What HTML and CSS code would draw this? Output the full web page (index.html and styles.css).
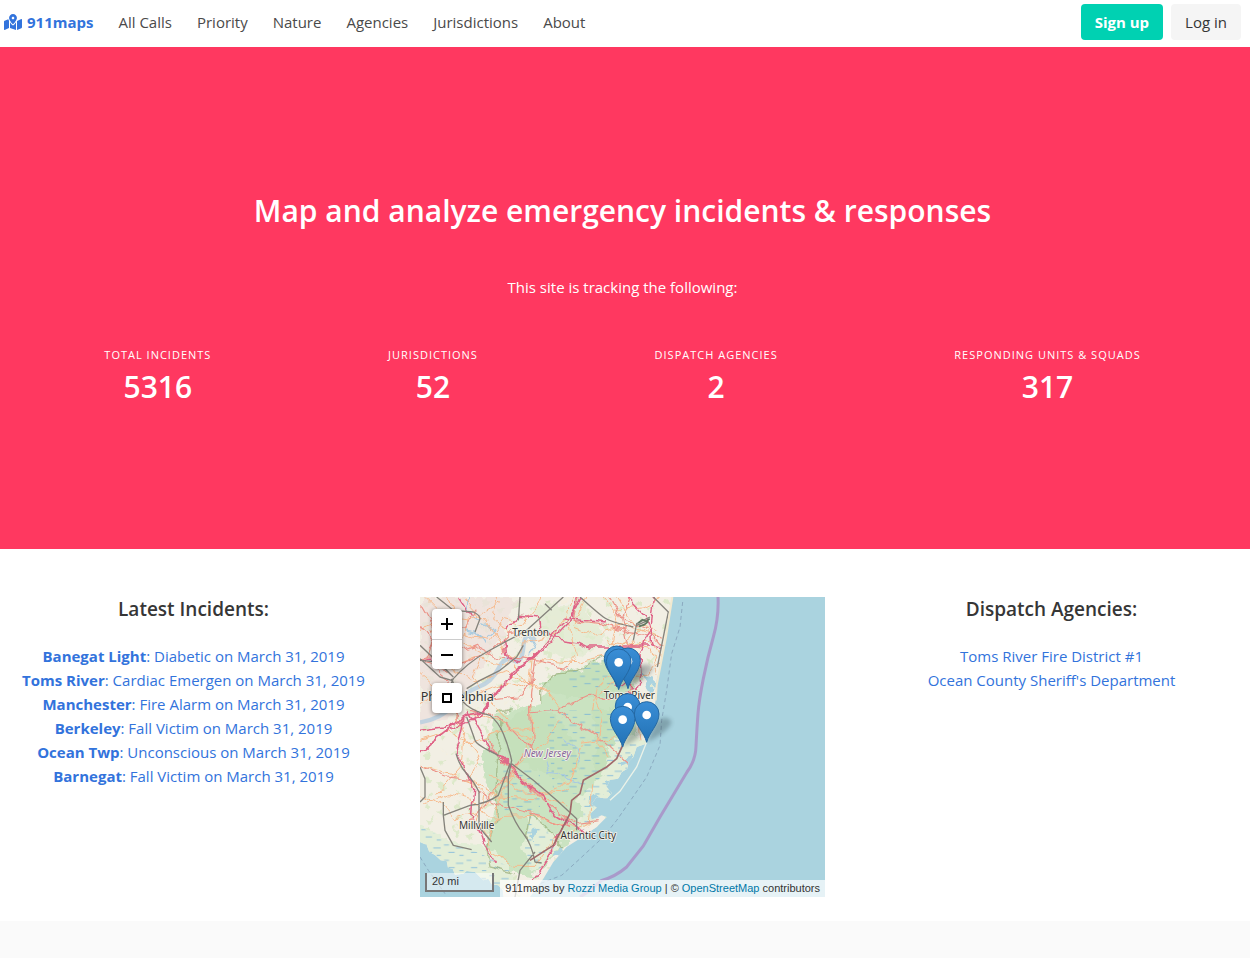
FILE: index.html
```html
<!DOCTYPE html>
<html lang="en">
<head>
<meta charset="utf-8">
<meta name="viewport" content="width=device-width, initial-scale=1">
<title>911maps</title>
<link rel="stylesheet" href="styles.css">
</head>
<body>
<nav class="navbar" aria-label="Main">
  <a class="brand" href="#">
    <svg class="brand-icon" viewBox="0 0 576 512" aria-hidden="true"><path fill="currentColor" d="M288 0c-69.59 0-126 56.41-126 126 0 56.26 82.35 158.8 113.9 196.02 6.39 7.54 17.82 7.54 24.2 0C331.65 284.8 414 182.26 414 126 414 56.41 357.59 0 288 0zm0 168c-23.2 0-42-18.8-42-42s18.8-42 42-42 42 18.8 42 42-18.8 42-42 42zM20.12 215.95A32.006 32.006 0 0 0 0 245.66v250.32c0 11.32 11.43 19.06 21.94 14.86L160 448V214.92c-8.84-15.98-16.07-31.54-21.25-46.42L20.12 215.95zM288 359.67c-14.07 0-27.38-6.18-36.51-16.96-19.66-23.2-40.57-49.62-59.49-76.72v182l192 64V266c-18.92 27.09-39.82 53.52-59.49 76.72-9.13 10.77-22.44 16.95-36.51 16.95zm266.06-198.51L416 224v288l139.88-55.95A31.996 31.996 0 0 0 576 426.34V176.02c0-11.32-11.43-19.06-21.94-14.86z"/></svg>
    <span>911maps</span>
  </a>
  <div class="nav-links">
    <a href="#">All Calls</a>
    <a href="#">Priority</a>
    <a href="#">Nature</a>
    <a href="#">Agencies</a>
    <a href="#">Jurisdictions</a>
    <a href="#">About</a>
  </div>
  <div class="nav-buttons">
    <a class="button button-primary" href="#">Sign up</a>
    <a class="button" href="#">Log in</a>
  </div>
</nav>

<header class="hero">
  <h1 class="hero-title">Map and analyze emergency incidents &amp; responses</h1>
  <p class="hero-lead">This site is tracking the following:</p>
  <dl class="stats">
    <div class="stat"><dt>Total Incidents</dt><dd>5316</dd></div>
    <div class="stat"><dt>Jurisdictions</dt><dd>52</dd></div>
    <div class="stat"><dt>Dispatch Agencies</dt><dd>2</dd></div>
    <div class="stat"><dt>Responding Units &amp; Squads</dt><dd>317</dd></div>
  </dl>
</header>

<main class="section">
  <div class="columns">
    <section class="column">
      <h2 class="column-title">Latest Incidents:</h2>
      <ul class="list">
        <li><a href="#"><strong>Banegat Light</strong>: Diabetic on March 31, 2019</a></li>
        <li><a href="#"><strong>Toms River</strong>: Cardiac Emergen on March 31, 2019</a></li>
        <li><a href="#"><strong>Manchester</strong>: Fire Alarm on March 31, 2019</a></li>
        <li><a href="#"><strong>Berkeley</strong>: Fall Victim on March 31, 2019</a></li>
        <li><a href="#"><strong>Ocean Twp</strong>: Unconscious on March 31, 2019</a></li>
        <li><a href="#"><strong>Barnegat</strong>: Fall Victim on March 31, 2019</a></li>
      </ul>
    </section>

    <section class="map" aria-label="Incident map">
      <svg class="map-canvas" viewBox="0 0 1215 900" preserveAspectRatio="xMinYMin slice" role="img" aria-label="Map of New Jersey">
        <defs>
          <linearGradient id="pin-fill" x1="0" y1="0" x2="0" y2="1"><stop offset="0" stop-color="#3a8ed6"/><stop offset="1" stop-color="#2272b5"/></linearGradient>
          <filter id="soft" x="-30%" y="-30%" width="160%" height="160%"><feGaussianBlur stdDeviation="6"/></filter>
          <filter id="winding" filterUnits="userSpaceOnUse" x="-20" y="-20" width="820" height="940"><feTurbulence type="fractalNoise" baseFrequency="0.02" numOctaves="3" seed="4" result="noise"/><feDisplacementMap in="SourceGraphic" in2="noise" scale="34" xChannelSelector="R" yChannelSelector="G"/></filter>
          <filter id="ragged" filterUnits="userSpaceOnUse" x="-20" y="-20" width="820" height="940"><feTurbulence type="fractalNoise" baseFrequency="0.03" numOctaves="3" seed="9" result="noise"/><feDisplacementMap in="SourceGraphic" in2="noise" scale="46" xChannelSelector="R" yChannelSelector="G"/></filter>
          <pattern id="marsh" width="68" height="46" patternUnits="userSpaceOnUse"><path d="M4 8h15M40 17h22M17 30h19M50 39h13" stroke="#62a8dc" stroke-width="2.5" opacity=".8"/></pattern>
          <pattern id="fields" width="90" height="76" patternUnits="userSpaceOnUse"><path d="M8 12l18-6 6 14-16 8zM50 34l24-4-8 20zM20 55l16 4-10 12z" fill="#d2e7bd" opacity=".65"/><path d="M70 4h10v8H70zM42 60h8v7h-8z" fill="#f4efdf"/></pattern>
          <clipPath id="land-clip"><path id="land-shape" d="M0 0H757L749 48 738 120 725 190 710 250 707 310 690 400 678 440 650 450 640 480 625 495 622 515 605 525 595 545 570 548 560 570 575 588 560 605 530 600 515 620 530 632 510 650 515 668 545 655 560 660 530 690 495 715 440 750 400 795 370 845 330 900H250L248 880 235 865 215 862 205 845 190 850 165 825 140 822 130 830 105 833 98 815 84 812 80 792 62 790 45 774 28 765 20 744 0 735Z"/></clipPath>
          <g id="pin">
            <path d="M-37-85A37 37 0 1 1 37-85C37-53 7-30 0 0C-7-30-37-53-37-85Z" fill="url(#pin-fill)" stroke="#2468a3" stroke-width="3"/>
            <circle cy="-82" r="13" fill="#fff"/>
          </g>
          <path id="pin-shadow" d="M0 0L24-56Q55-88 75-62 66-32 0 0Z" fill="#24343c" opacity=".3" filter="url(#soft)"/>
        </defs>
        <rect width="1215" height="900" fill="#aad3df"/>
        <use href="#land-shape" fill="#f2efe4"/>
        <g clip-path="url(#land-clip)">
          <rect width="760" height="900" fill="url(#fields)" filter="url(#ragged)"/>
          <path d="M0 0H300L260 90 200 180 140 280 80 370 0 400Z" fill="#eee1dd" opacity=".75" filter="url(#ragged)"/>
          <path d="M340 30L490 20 560 130 450 200 390 165 360 100Z" fill="#e0ecd0" opacity=".7" filter="url(#ragged)"/>
          <g filter="url(#ragged)">
            <path d="M180 500L230 350 300 330 365 315 365 270 410 225 485 218 560 180 620 195 650 290 660 450 600 510 530 580 470 690 490 710 430 750 390 800 340 835 290 830 210 810 200 750 225 620Z" fill="#cae3c1"/>
            <path d="M240 380L330 340 410 360 455 430 480 510 430 560 370 520 270 490ZM365 270L410 225 485 218 550 182 610 260 545 300 450 300ZM520 340L590 330 590 510 530 520Z" fill="#bfdeb6" opacity=".5"/>
            <path d="M580 420L690 430 650 500 590 590 550 640 485 700 470 590 550 540ZM330 640L420 740 380 800 340 830 310 750ZM-20 680L120 740 205 745 280 825 285 880 100 853 -20 760Z" fill="#e3eed7"/>
          </g>
          <path d="M580 440L680 440 600 610 490 700 490 610ZM330 640L410 740 350 830 310 790ZM0 690L270 810 280 890 80 840 0 760ZM380 340H600V590H400ZM440 210L560 185 610 280 450 280ZM250 520H360V650H250Z" fill="url(#marsh)"/>
          <path d="M600 490l35-15 10 15-35 20zM560 565l25-10 15 10-25 28-15-8zM515 600l25-5 15 15-25 10-18 5zM395 780l20-25 15 17-25 15zM665 220l32 20 5 55-18-15zM340 690l12 10-5 25-14-10z" fill="#aad3df" filter="url(#ragged)"/>
          <path d="M0 376Q65 365 100 325T175 270 235 215 280 190 310 150 345 130" fill="none" stroke="#b8cfdf" stroke-width="13" opacity=".85"/>
          <g filter="url(#winding)" fill="none">
            <path d="M110 95l60 10 20 35M150 0l-15 35 45 30M325 120l22 35-18 24M380 490l10 30 30 4 20 20 40 15M440 430l35 30 5 35M190 80l30 15-25 22" stroke="#a9cbe0" stroke-width="4"/>
            <path d="M365 315L365 270 410 225 485 218 560 180 620 190M240 370L228 650 200 750 210 810 290 830M230 350L275 335M320 740L335 650 370 680 425 750" stroke="#98ac78" stroke-width="4" opacity=".7"/>
          </g>
          <g fill="none" stroke="#f7b98b" stroke-width="3" stroke-linejoin="round" filter="url(#winding)">
            <path d="M80 0l15 40-65 70 85 90 50-20 90 25 70-70 80-20 60-115M125 110l80 15 45-60 60 15 60-80M20 0l60 60 70 10 90-50M130 0l65 70 85 130 50 70 40 10M0 100l50-15 25 110 90 60 95-30 100 60M150 50l-30 80 70 40-30 70 100 130"/>
            <path d="M230 0l-15 70 90 60M500 0l-35 90 60 25 90-30 110 35M440 60l30 115-35 40M350 200l30-15 95 10 95-20 120-95M550 0l45 60-15 75 60 80M0 230l80 70 60 100-10 100-80 90M0 430l80-25 70 35 110-40 100-10M150 350l100 30 80 50M340 180l-10 110 10 120-60 110-50 100-25 115"/>
            <path d="M0 510l85 20 80 30 70 40 110 5 105-50 40-120 110-15M130 420l50 60-30 70 40 40-20 85M10 620l80-30 70 20 45 50 140-5 120 40M0 600l60 25 40 40 80-25 100-125 80-70 75-90M330 260l55 25 40 50M180 680l35 85 70 40 60 0 50-70 110-50 10-120M650 130l-50 65-75 80-10 65"/>
            <path d="M590 0l45 75 80 20M580 40l85-10 60-30M610 155l85-20 30 50-40 50-60 0M560 130l130 30 30 70M535 290l55-50 40 10 20 90 10 90M260 530l55 20 50 50 80 30M450 570l-30 20-105-5-110-55M0 320l60-40 95 15 100-40 60 20M520 300l25 55-10 75 35 50"/>
          </g>
          <g fill="none" stroke="#ec9388" stroke-width="3.5" stroke-linejoin="round" filter="url(#winding)">
            <path d="M0 185l80-5 90-35 70 35 105 10 100 20M350 170l-18 130 0 45 5 100-70 80-120 150M150 340l65 15 55 35 70 70M0 510l80 30 75 8M170 585l90 45 100 25 85 40M200 425l55 80 65 60 50 45 80 65M330 345l85-10 90-40 45 15 50 0M410 335l60 45 80 50 90 80M0 85l35 55-20 60 65 20M0 15l45 80-20 65M30 110l100-15 45-60M210 310l85-10 50-50M30 210l50 40 10 75 45 50M120 200l95-35 70-70"/>
            <path d="M570 0l35 65 75 30 60 75M630 0l-25 70 20 90M480 0l-15 70 80 10 85 30 95 10M400 650l80 35 50-8"/>
          </g>
          <g fill="none" stroke="#df6487" stroke-width="4.5" stroke-linejoin="round" filter="url(#winding)">
            <path d="M0 465L80 400 175 355 215 310 260 245 350 175 400 110 470 40 490 0M15 450L100 380 140 355 180 345 225 290 280 220 345 185 420 105 463 60 475 0M140 345L190 430 260 505 305 550 370 600 400 650 470 695 500 710M135 360L120 440 110 470 138 520 158 570 152 650 175 690 190 740 230 800M355 100L400 125 475 135 505 150 580 150 690 150M335 850L370 800 400 750 435 675M430 60L560 75M620 0L675 55 690 95 660 180 665 260 630 285M700 0L690 90 695 140 715 150M260 100L300 55 355 60 360 100M0 400L70 390 135 360M0 190L35 190M110 0l30 45 20 5M250 125l10 60 40 10M640 270l-60-10"/>
          </g>
          <g fill="none" stroke="#85837c" stroke-width="4" stroke-linejoin="round">
            <path d="M0 185L60 240 95 250Q145 195 200 165T320 100L430 0M95 245Q115 305 140 325T210 355Q235 375 250 410T275 490L265 540 265 625Q285 680 310 710T345 795L365 798M140 275L180 250 240 220 290 180 310 145M100 240L0 145M0 190l55 5 45 45M275 500L340 550 410 610 470 665 470 700M270 500L235 595Q200 620 150 625L70 655 75 700 100 745 155 758M70 655v-40M140 360Q160 415 165 430T235 475M108 470Q120 510 140 530T177 585V690L215 735M345 765L300 820 285 900M50 0l50 40 60 5Q180 55 180 65L165 105M700 0l45 45-33 165M300 0l-5 70M0 510L15 545 15 600 0 615M480 0Q530 45 550 60T640 90M100 245l-30 65M375 20l20 20M640 130l10-50 40-20M650 85l35-15"/>
            <path d="M608 445L590 485 560 510 490 550 480 590 455 610 450 650 400 745 330 790" stroke="#a1696a" stroke-width="5"/>
          </g>
          <path d="M655 78l12-10 12 5 10-8M657 88l16-5 12-10" stroke="#607760" stroke-width="5" fill="none"/>
        </g>
        <path d="M757 0L738 120 710 265 707 310" fill="none" stroke="#f2e9cf" stroke-width="6"/>
        <path d="M680 435L650 510 600 583 570 610" fill="none" stroke="#ebf2e8" stroke-width="4"/>
        <path d="M788 15L780 90 755 170 740 280 725 370 720 445 680 540 625 620 590 670 550 720 480 785 425 835 360 860M0 780L25 820 75 890" fill="none" stroke="#8baac0" stroke-width="3" stroke-dasharray="12 9"/>
        <path d="M894 0Q897 60 880 120T850 245 834 350 828 448Q827 490 801 525L720 660 670 747 620 810Q585 840 545 850L510 880 480 900" fill="none" stroke="#a99aca" stroke-width="9"/>
        <g class="map-labels">
          <text x="332" y="117">Trenton</text>
          <text class="city" x="112" y="311">Philadelphia</text>
          <text x="628" y="306">Toms River</text>
          <text class="region" x="382" y="480">New Jersey</text>
          <text x="170" y="697">Millville</text>
          <text x="505" y="725">Atlantic City</text>
        </g>
        <use href="#pin-shadow" x="624" y="275"/>
        <use href="#pin-shadow" x="596" y="278"/>
        <use href="#pin-shadow" x="680" y="436"/>
        <use href="#pin-shadow" x="608" y="450"/>
        <use href="#pin" x="590" y="269"/>
        <use href="#pin" x="624" y="275"/>
        <use href="#pin" x="596" y="278"/>
        <use href="#pin" x="623" y="412"/>
        <use href="#pin" x="680" y="436"/>
        <use href="#pin" x="608" y="450"/>
      </svg>
      <div class="map-controls">
        <div class="map-bar">
          <button type="button" aria-label="Zoom in"><svg viewBox="0 0 12 12" aria-hidden="true"><path d="M6 0v12M0 6h12"/></svg></button>
          <button type="button" aria-label="Zoom out"><svg viewBox="0 0 12 12" aria-hidden="true"><path d="M0 6h12"/></svg></button>
        </div>
        <div class="map-bar">
          <button type="button" aria-label="Reset view"><svg viewBox="0 0 12 12" aria-hidden="true"><path d="M2 2h8v8h-8z"/></svg></button>
        </div>
      </div>
      <div class="map-scale">20 mi</div>
      <div class="map-credit">911maps by <a href="#">Rozzi Media Group</a> | © <a href="#">OpenStreetMap</a> contributors</div>
    </section>

    <section class="column">
      <h2 class="column-title">Dispatch Agencies:</h2>
      <ul class="list">
        <li><a href="#">Toms River Fire District #1</a></li>
        <li><a href="#">Ocean County Sheriff's Department</a></li>
      </ul>
    </section>
  </div>
</main>
<footer class="footer"></footer>
</body>
</html>
```
FILE: styles.css
```css
* {
  box-sizing: border-box;
}

body {
  margin: 0;
  min-height: 100vh;
  display: flex;
  flex-direction: column;
  overflow-x: hidden;
  background: #fff;
  color: #4a4a4a;
  font-family: "Segoe UI", "Open Sans", "Noto Sans", sans-serif;
  font-size: 15px;
  line-height: 24px;
}

a {
  color: #3273dc;
  text-decoration: none;
}

h1, h2, p, dl, dd, ul {
  margin: 0;
  padding: 0;
}

.navbar {
  display: flex;
  align-items: center;
  min-height: 47px;
  padding: 0 9px 4px 4px;
}

.brand {
  display: flex;
  align-items: center;
  gap: 5px;
  margin-right: 25px;
  font-weight: 700;
}

.brand-icon {
  width: 18px;
  height: 16px;
}

.nav-links {
  display: flex;
  gap: 25px;
}

.nav-links a {
  color: #4a4a4a;
}

.nav-buttons {
  display: flex;
  gap: 8px;
  margin-left: auto;
}

.button {
  padding: 6px 14px;
  border-radius: 4px;
  background: #f5f5f5;
  color: #363636;
}

.button-primary {
  background: #00d1b2;
  color: #fff;
  font-weight: 700;
}

.hero {
  display: flex;
  flex-direction: column;
  justify-content: center;
  min-height: 502px;
  padding: 48px 21px 48px 16px;
  background: #ff3860;
  color: #fff;
  text-align: center;
}

.hero-title {
  margin-bottom: 44px;
  font-size: 30px;
  font-weight: 600;
  line-height: 40px;
}

.hero-lead {
  margin-bottom: 48px;
}

.stats {
  display: flex;
}

.stat {
  flex: 1 1 auto;
}

.stat dt {
  margin-bottom: 6px;
  font-size: 11px;
  line-height: 16px;
  letter-spacing: 1px;
  text-transform: uppercase;
}

.stat dd {
  font-size: 30px;
  font-weight: 600;
  line-height: 36px;
}

.section {
  padding: 48px 0 24px;
}

.columns {
  display: grid;
  grid-template-columns: repeat(3, 1fr);
  gap: 24px;
  margin: 0 -4px 0 -9px;
}

.column {
  text-align: center;
}

.column-title {
  margin-bottom: 23px;
  color: #363636;
  font-size: 19px;
  font-weight: 600;
  line-height: 24px;
}

.list {
  list-style: none;
}

.map {
  position: relative;
  height: 300px;
  overflow: hidden;
  background: #aad3df;
  color: #333;
  font-family: "Liberation Sans", Arial, sans-serif;
  font-size: 11px;
  line-height: 17px;
}

.map-canvas {
  display: block;
  width: 100%;
  height: 100%;
}

.map-labels {
  fill: #333;
  stroke: #f5f3ea;
  stroke-width: 5px;
  stroke-linejoin: round;
  paint-order: stroke;
  font-family: "Noto Sans", sans-serif;
  font-size: 30px;
  text-anchor: middle;
}

.map-labels .city {
  font-size: 38px;
}

.map-labels .region {
  fill: #86679a;
  font-style: italic;
}

.map-controls {
  position: absolute;
  top: 12px;
  left: 12px;
  display: grid;
  gap: 14px;
}

.map-bar {
  border-radius: 4px;
  background: #fff;
  box-shadow: 0 1px 4px rgba(0, 0, 0, 0.5);
}

.map-bar button {
  display: grid;
  place-items: center;
  width: 30px;
  height: 30px;
  padding: 0;
  border: 0;
  background: none;
}

.map-bar button + button {
  border-top: 1px solid #ccc;
}

.map-bar svg {
  width: 12px;
  height: 12px;
  fill: none;
  stroke: #000;
  stroke-width: 2px;
}

.map-scale {
  position: absolute;
  bottom: 5px;
  left: 5px;
  width: 69px;
  padding-left: 5px;
  border: 2px solid #777;
  border-top: 0;
  background: rgba(255, 255, 255, 0.5);
}

.map-credit {
  position: absolute;
  right: 0;
  bottom: 0;
  padding: 0 5px;
  background: rgba(255, 255, 255, 0.7);
  white-space: nowrap;
}

.map-credit a {
  color: #0078a8;
}

.footer {
  flex: 1;
  min-height: 37px;
  background: #fafafa;
}
```
